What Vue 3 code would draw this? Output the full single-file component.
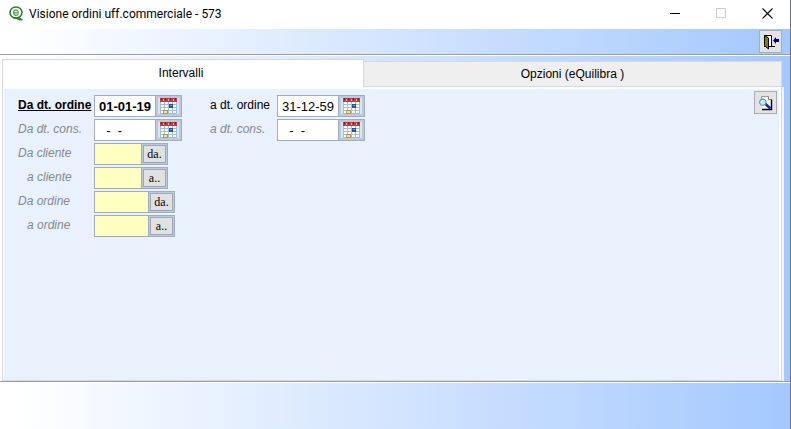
<template>
  <main class="window">

    <!-- Title bar -->
    <header class="titlebar">
      <svg class="logo" width="14" height="15" viewBox="0 0 14 15" aria-hidden="true">
        <ellipse cx="7" cy="6.5" rx="6" ry="5.6" fill="none" stroke="#23801f" stroke-width="1.5" />
        <path d="M4.5 6.8h4.8C9.3 2.8 4.5 3 4.5 6.7c0 3.2 3.6 3.2 4.8 1.5" fill="none" stroke="#4d9b43" stroke-width="1.2" />
        <path d="M4.5 11.8c4-.4 4.500 3 9 1.700M9 11l3.500 2.500" fill="none" stroke="#23801f" stroke-width="1.4" />
      </svg>
      <h1 class="title">Visione ordini uff.commerciale - 573</h1>
      <div class="window-controls">
        <button type="button" class="control" aria-label="Riduci">
          <svg width="11" height="11" viewBox="0 0 11 11"><path d="M0 5.5h10" stroke="#000" /></svg>
        </button>
        <button type="button" class="control" aria-label="Ingrandisci" disabled>
          <svg width="11" height="11" viewBox="0 0 11 11"><path d="M.5.5h9v9h-9z" fill="none" stroke="#ccc" /></svg>
        </button>
        <button type="button" class="control" aria-label="Chiudi">
          <svg width="11" height="11" viewBox="0 0 11 11"><path d="M.5.5l10 10M10.5.5l-10 10" stroke="#000" stroke-width="1.1" /></svg>
        </button>
      </div>
    </header>

    <!-- Toolbar -->
    <div class="toolbar">
      <button type="button" class="tool-button" aria-label="Esci">
        <svg width="17" height="16" viewBox="0 0 17 16">
          <path d="M2 12.5h11M2.5 1.5h7v11" fill="none" stroke="#000" />
          <path d="M6 2h3v10H6z" fill="#fff" />
          <path d="M2.5 1.5l4 2.5v11l-4-3.5z" fill="#808000" stroke="#000" />
          <path d="M11 6.5L14 3v2h3v3h-3v2z" fill="#000080" />
        </svg>
      </button>
    </div>

    <!-- Tabs and form -->
    <section class="content">
      <div class="tabs" role="tablist">
        <button
          v-for="tab in tabs"
          :key="tab.id"
          type="button"
          role="tab"
          class="tab"
          :class="{ active: tab.id === activeTab }"
          :aria-selected="tab.id === activeTab"
          @click="activeTab = tab.id"
        >{{ tab.label }}</button>
      </div>

      <div class="panel" role="tabpanel">
        <form v-show="activeTab === 'intervalli'" class="filters" @submit.prevent>
          <div v-for="(row, index) in rows" :key="index" class="row">
            <div v-for="field in row" :key="field.id" class="cell">
              <label :for="field.id" class="label" :class="field.style">{{ field.label }}</label>
              <div class="field" :class="field.kind">
                <input :id="field.id" v-model="field.value" type="text" class="input" :class="field.style" />
                <button v-if="field.kind === 'date'" type="button" class="pick" aria-label="Calendario">
                  <svg width="19" height="18" viewBox="0 0 19 18" shape-rendering="crispEdges">
                    <path d="M1 3h17v14H1z" fill="#fff" />
                    <path d="M1 7.5h17M1 10.5h17M1 13.5h17M1 16.5h17M1.5 4v13M5.5 4v13M9.5 4v13M13.5 4v13M17.5 4v13" stroke="#9fc0dc" />
                    <path d="M1 1h17v4H1z" fill="#c23a42" />
                    <path d="M2 1h1v2H2zM6 1h1v2H6zM11 1h1v2h-1zM16 1h1v2h-1z" fill="#66242c" />
                    <path d="M4 2h1v2H4zM9 2h1v2H9zM14 2h1v2h-1z" fill="#eeb0b4" />
                    <path d="M10 7h4v4h-4z" fill="#244f9c" />
                    <path d="M11 8h2v1h-2z" fill="#6f9fe0" />
                    <path d="M4.5 13.5h4v3h-4z" fill="#f5e3a4" stroke="#b99752" />
                  </svg>
                </button>
                <button v-else type="button" class="pick lookup">{{ field.button }}</button>
              </div>
            </div>
          </div>
        </form>
        <button type="button" class="tool-button" aria-label="Anteprima">
          <svg width="16" height="16" viewBox="0 0 16 16">
            <path d="M3.5 1.5h7l3 3v10h-9z" fill="#fff" />
            <path d="M3.5 4V1.5h7" fill="none" stroke="#999" />
            <path d="M10.5 1.5v3h3" fill="none" stroke="#777" />
            <path d="M4 14.5h9.5v-10" fill="none" stroke="#000" stroke-width="1.4" />
            <path d="M7.5 9l5 4.5" stroke="#0a2fb5" stroke-width="2.6" />
            <circle cx="4.8" cy="7.2" r="3.2" fill="#b7f0fa" stroke="#5b8797" />
            <path d="M3 7l2-2" stroke="#fff" />
          </svg>
        </button>
      </div>
    </section>

    <footer class="footer"></footer>
  </main>
</template>

<script setup>
import { ref } from 'vue'

const tabs = [
  { id: 'intervalli', label: 'Intervalli' },
  { id: 'opzioni', label: 'Opzioni (eQuilibra )' }
]

const activeTab = ref('intervalli')

const rows = ref([
  [
    { id: 'da-dt-ordine', label: 'Da dt. ordine', kind: 'date', value: '01-01-19', style: 'required' },
    { id: 'a-dt-ordine', label: 'a dt. ordine', kind: 'date', value: '31-12-59', style: 'normal' }
  ],
  [
    { id: 'da-dt-cons', label: 'Da dt. cons.', kind: 'date', value: '  -  -', style: 'optional' },
    { id: 'a-dt-cons', label: 'a dt. cons.', kind: 'date', value: '  -  -', style: 'optional' }
  ],
  [{ id: 'da-cliente', label: 'Da cliente', kind: 'client', value: '', button: 'da.', style: 'optional' }],
  [{ id: 'a-cliente', label: 'a cliente', kind: 'client', value: '', button: 'a..', style: 'optional indent' }],
  [{ id: 'da-ordine', label: 'Da ordine', kind: 'order', value: '', button: 'da.', style: 'optional' }],
  [{ id: 'a-ordine', label: 'a ordine', kind: 'order', value: '', button: 'a..', style: 'optional indent' }]
])
</script>

<style>
body {
  margin: 0;
}
</style>

<style scoped>
* {
  box-sizing: border-box;
}

.window {
  min-height: 100vh;
  display: flex;
  flex-direction: column;
  border-right: 1px solid #6b7078;
  background: linear-gradient(to right, #fff 0, #fff 2%, #a4c8ff 100%);
  font-family: "Liberation Sans", Arial, sans-serif;
  font-size: 12px;
  color: #000;
}

button {
  font: inherit;
  color: inherit;
  padding: 0;
}

svg {
  display: block;
}

.titlebar {
  height: 29px;
  display: flex;
  align-items: center;
  padding: 0 0 2px 9px;
  background: #fff;
}

.title {
  margin: 0 0 0 6px;
  font-family: Roboto, "Segoe UI", sans-serif;
  font-size: 12px;
  font-weight: 400;
}

.window-controls {
  margin-left: auto;
  display: flex;
}

.control {
  width: 46px;
  height: 27px;
  display: flex;
  align-items: center;
  justify-content: center;
  border: 0;
  background: none;
}

.toolbar {
  display: flex;
  justify-content: flex-end;
  padding: 1px 8px 1px 0;
  border-bottom: 1px solid #999ca3;
  box-shadow: 0 1px #fff;
}

.tool-button {
  width: 23px;
  height: 23px;
  display: flex;
  align-items: center;
  justify-content: center;
  border: 1px solid #a9adb3;
  background: #e3e3e3;
}

.content {
  flex: 1;
  display: flex;
  flex-direction: column;
  padding: 4px 6px 0 2px;
}

.tabs {
  display: flex;
  align-items: flex-end;
  padding-right: 2px;
}

.tab {
  flex: 1;
  height: 26px;
  border: 1px solid #d5d8dc;
  border-left: 0;
  background: #efefef;
}

.tab.active {
  flex: 0 0 46.4%;
  height: 28px;
  padding: 0 4px 2px 0;
  border: 1px solid #d5d8dc;
  border-bottom: 0;
  background: #fff;
}

.panel {
  flex: 1;
  display: flex;
  justify-content: space-between;
  align-items: flex-start;
  margin-right: 2px;
  padding: 4px 4px 4px 14px;
  border: 1px solid #d5d8dc;
  border-top: 0;
  background: #e9f1fd;
  box-shadow: inset 1px 0 #fff, inset -2px 2px #fff, 2px 0 #f4f4f4;
}

.filters {
  display: flex;
  flex-direction: column;
  gap: 2px;
  padding: 4px 0 0 1px;
}

.row {
  display: flex;
  gap: 28px;
}

.cell {
  display: flex;
}

.label {
  width: 76px;
  line-height: 20px;
  white-space: nowrap;
}

.cell + .cell .label {
  width: 67px;
}

.label.required {
  font-weight: 700;
  text-decoration: underline;
}

.label.optional {
  font-style: italic;
  color: #85898f;
}

.label.indent {
  padding-left: 9px;
}

.field {
  height: 22px;
  display: flex;
  border: 1px solid #a3adba;
  background: #ffffc1;
}

.date {
  width: 88px;
  background: #fff;
}

.client {
  width: 74px;
}

.order {
  width: 81px;
}

.input {
  flex: 1;
  min-width: 0;
  padding: 1px 0 0 4px;
  border: 0;
  background: none;
  font: inherit;
  font-size: 13px;
  color: #000;
}

.input.required {
  font-weight: 700;
}

.pick {
  width: 26px;
  display: flex;
  align-items: center;
  justify-content: center;
  border: 1px solid #9dadbd;
  border-width: 0 0 0 1px;
  background: #dfe4ea;
  box-shadow: inset 0 0 0 2px #bccbdc;
}

.lookup {
  background: #e1e1e1;
  box-shadow: inset 0 0 0 1px #bccbdc, inset 0 0 0 2px #98a8bd;
  font-family: "Liberation Serif", "Times New Roman", serif;
}

.footer {
  height: 48px;
  border-top: 1px solid #999ca3;
  box-shadow: inset 0 1px #fff;
}
</style>
